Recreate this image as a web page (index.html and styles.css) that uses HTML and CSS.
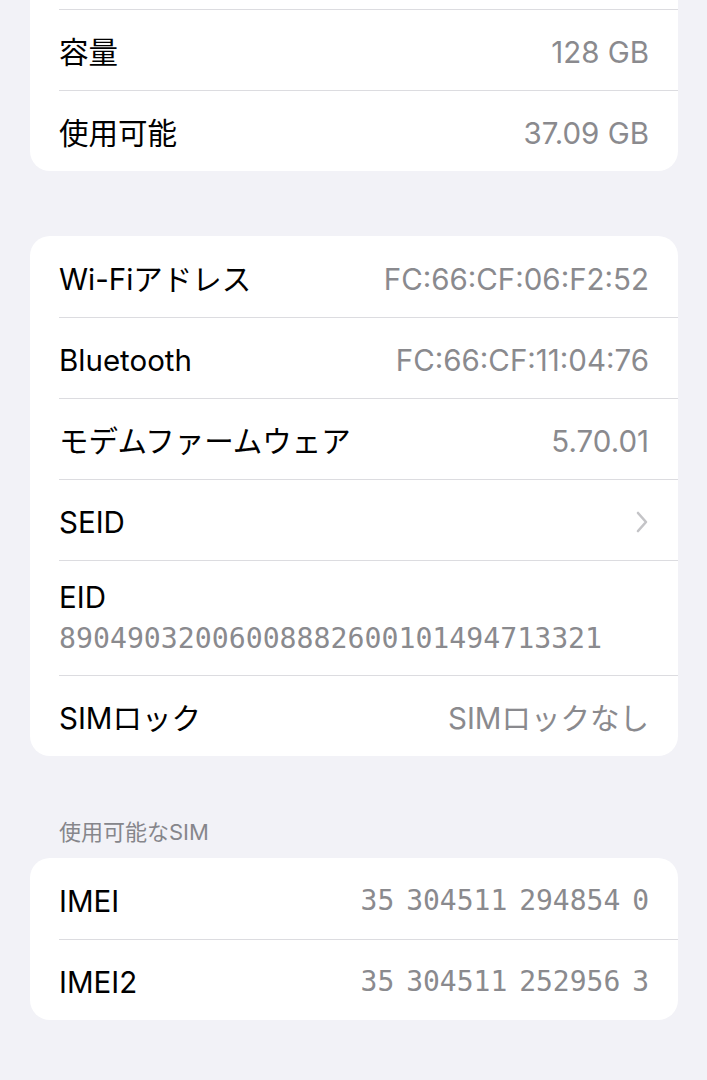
FILE: index.html
```html
<!DOCTYPE html>
<html lang="ja">
<head>
  <meta charset="UTF-8">
  <title>情報</title>
  <link rel="stylesheet" href="styles.css">
</head>
<body>

  <div class="card cut">
    <div class="row spacer"></div>
    <div class="row">
      <div class="line"><span class="label">容量</span><span class="value">128 GB</span></div>
    </div>
    <div class="row">
      <div class="line"><span class="label">使用可能</span><span class="value">37.09 GB</span></div>
    </div>
  </div>

  <div class="card gap">
    <div class="row">
      <div class="line"><span class="label">Wi-Fiアドレス</span><span class="value">FC:66:CF:06:F2:52</span></div>
    </div>
    <div class="row">
      <div class="line"><span class="label">Bluetooth</span><span class="value">FC:66:CF:11:04:76</span></div>
    </div>
    <div class="row">
      <div class="line"><span class="label">モデムファームウェア</span><span class="value">5.70.01</span></div>
    </div>
    <div class="row">
      <div class="line">
        <span class="label">SEID</span>
        <svg class="chevron" width="14" height="22" viewBox="0 0 14 22">
          <path d="M3 2 L11 11 L3 20" fill="none" stroke="#c4c4c7" stroke-width="2.6" stroke-linecap="round" stroke-linejoin="round"/>
        </svg>
      </div>
    </div>
    <div class="row">
      <div class="line stack">
        <span class="label">EID</span>
        <span class="mono">89049032006008882600101494713321</span>
      </div>
    </div>
    <div class="row">
      <div class="line"><span class="label">SIMロック</span><span class="value">SIMロックなし</span></div>
    </div>
  </div>

  <div class="section-title">使用可能なSIM</div>
  <div class="card">
    <div class="row">
      <div class="line"><span class="label">IMEI</span><span class="value mono">35 304511 294854 0</span></div>
    </div>
    <div class="row">
      <div class="line"><span class="label">IMEI2</span><span class="value mono">35 304511 252956 3</span></div>
    </div>
  </div>

</body>
</html>
```

FILE: styles.css
```css
body {
  margin: 0;
  background-color: #f2f2f7;
  font-family: Inter, "Noto Sans CJK JP", sans-serif;
  color: #000;
}
.card {
  margin: 0 29px 0 30px;
  background-color: #fff;
  border-radius: 20px;
}
.card.cut {
  border-radius: 0 0 20px 20px;
}
.card.gap {
  margin-top: 65px;
}
.row {
  padding-left: 29px;
}
.row.spacer {
  height: 9px;
}
.line {
  display: flex;
  justify-content: space-between;
  align-items: center;
  box-sizing: border-box;
  min-height: 81px;
  padding-top: 4px;
  padding-right: 29px;
}
.row + .row .line {
  border-top: 1px solid #dcdce0;
}
.label {
  font-size: 29.5px;
  line-height: 34px;
}
.value {
  font-size: 29.5px;
  line-height: 34px;
  color: #8a8a8e;
}
.line.stack {
  flex-direction: column;
  align-items: flex-start;
  justify-content: flex-start;
  gap: 7px;
  padding-top: 19px;
  padding-bottom: 18px;
}
.mono {
  font-family: "DejaVu Sans Mono", monospace;
  font-size: 28.2px;
  line-height: 36px;
  color: #8a8a8e;
}
.value.mono {
  font-size: 28px;
  word-spacing: -5px;
  line-height: 34px;
}
.section-title {
  margin: 63px 0 13px 59px;
  font-size: 22px;
  line-height: 26px;
  color: #86868b;
}
```
